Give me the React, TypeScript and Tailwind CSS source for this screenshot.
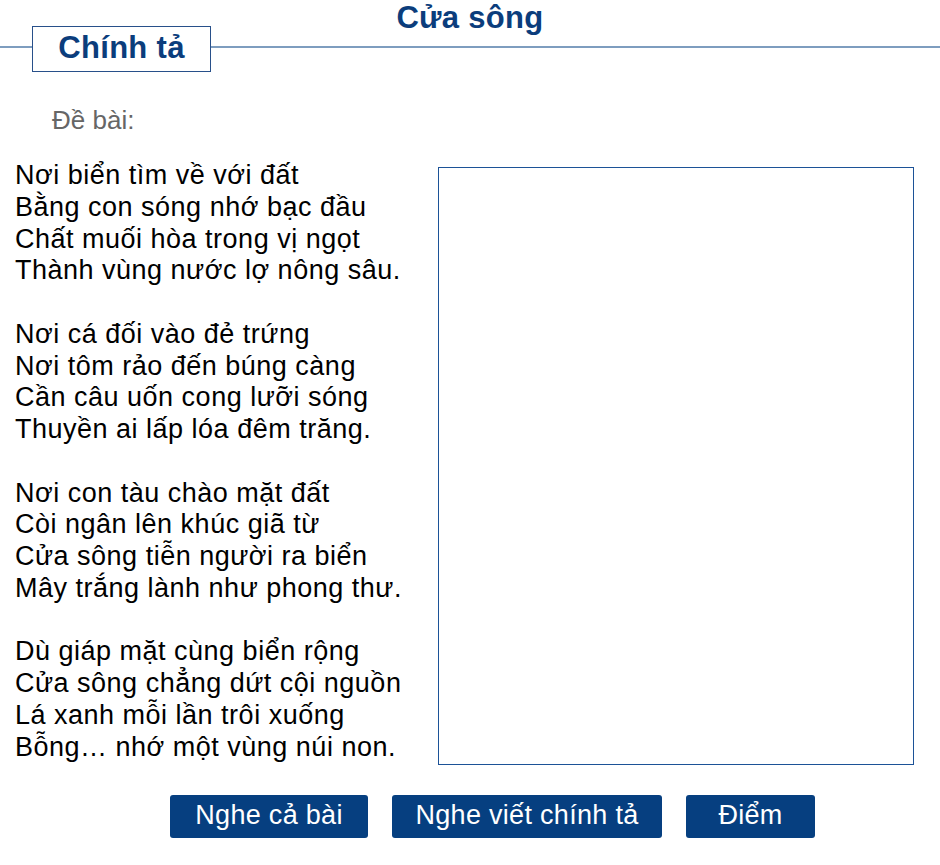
import React from "react";

const stanzas = [
  ["Nơi biển tìm về với đất", "Bằng con sóng nhớ bạc đầu", "Chất muối hòa trong vị ngọt", "Thành vùng nước lợ nông sâu."],
  ["Nơi cá đối vào đẻ trứng", "Nơi tôm rảo đến búng càng", "Cần câu uốn cong lưỡi sóng", "Thuyền ai lấp lóa đêm trăng."],
  ["Nơi con tàu chào mặt đất", "Còi ngân lên khúc giã từ", "Cửa sông tiễn người ra biển", "Mây trắng lành như phong thư."],
  ["Dù giáp mặt cùng biển rộng", "Cửa sông chẳng dứt cội nguồn", "Lá xanh mỗi lần trôi xuống", "Bỗng… nhớ một vùng núi non."],
];

export default function App() {
  return (
    <div className="w-[940px] h-[865px] bg-white overflow-hidden" style={{ fontFamily: '"Liberation Sans", Arial, sans-serif' }}>
      <div className="text-center text-[31px] leading-[36px] font-bold text-[#0b3d7c] tracking-[0.3px]">Cửa sông</div>
      <div className="flex items-start mt-[-10px]">
        <div className="w-[32px] h-[2px] mt-[20px] bg-[#7e9dbf]" />
        <div className="w-[179px] h-[46px] border border-[#28508a] flex items-center justify-center pb-[4px] text-[31px] font-bold text-[#0b3d7c] leading-none tracking-[0.3px]">Chính tả</div>
        <div className="flex-1 h-[2px] mt-[20px] bg-[#7e9dbf]" />
      </div>
      <div className="pl-[52px] mt-[34px] text-[26px] leading-[28px] text-[#666666]">Đề bài:</div>
      <div className="flex items-start mt-[26px]">
        <div className="pl-[15px] w-[438px] text-[27px] leading-[31.75px] text-black tracking-[0.5px]">
          {stanzas.map((s, i) => (
            <div key={i} className={i > 0 ? "mt-[31.75px]" : ""}>
              {s.map((l) => (
                <div key={l}>{l}</div>
              ))}
            </div>
          ))}
        </div>
        <div className="w-[476px] h-[598px] mt-[7px] border border-[#1c5297]" />
      </div>
      <div className="flex gap-[24px] pl-[170px] mt-[30px]">
        <button className="w-[198px] h-[43px] rounded-[3px] bg-[#063f80] text-white text-[27px] leading-none tracking-[0.3px] pb-[3px]">Nghe cả bài</button>
        <button className="w-[270px] h-[43px] rounded-[3px] bg-[#063f80] text-white text-[27px] leading-none tracking-[0.3px] pb-[3px]">Nghe viết chính tả</button>
        <button className="w-[129px] h-[43px] rounded-[3px] bg-[#063f80] text-white text-[27px] leading-none tracking-[0.3px] pb-[3px]">Điểm</button>
      </div>
    </div>
  );
}
